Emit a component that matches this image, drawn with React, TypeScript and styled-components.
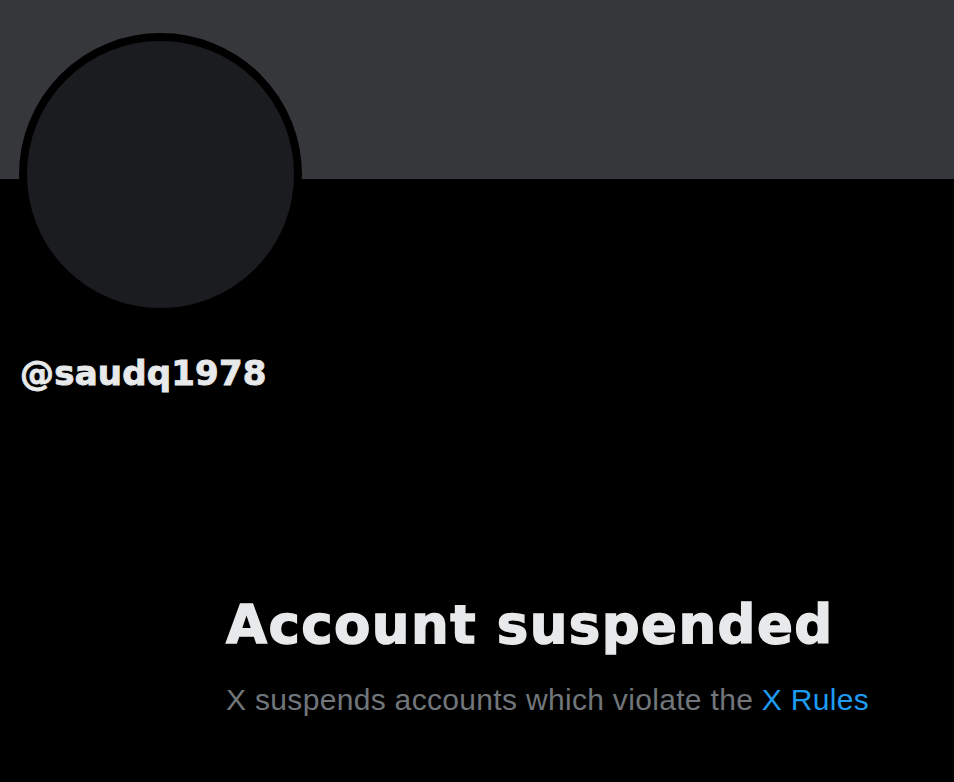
import React from "react";
import styled, { createGlobalStyle } from "styled-components";

const Global = createGlobalStyle`
  html, body { margin: 0; padding: 0; background: #000; }
  body { font-family: "Liberation Sans", Arial, sans-serif; }
`;

const Page = styled.div`
  width: 954px;
  height: 782px;
  background: #000;
  overflow: hidden;
  display: flex;
  flex-direction: column;
`;

const Banner = styled.div`
  height: 179px;
  background: #36373b;
  flex: none;
`;

const Profile = styled.div`
  display: flex;
  flex-direction: column;
  align-items: flex-start;
  padding-left: 19px;
`;

const Avatar = styled.div`
  width: 267px;
  height: 267px;
  margin-top: -146px;
  border: 8px solid #000;
  border-radius: 50%;
  background: #1b1c20;
`;

const Handle = styled.div`
  margin-top: 37px;
  margin-left: 1px;
  font-family: "DejaVu Sans", sans-serif;
  font-weight: 700;
  font-size: 34px;
  line-height: 40px;
  letter-spacing: 0.2px;
  -webkit-text-stroke: 0.9px #e7e9ea;
  color: #e7e9ea;
`;

const Notice = styled.div`
  margin-top: 202px;
  padding-left: 226px;
  display: flex;
  flex-direction: column;
  gap: 27px;
`;

const Title = styled.h1`
  margin: 0;
  font-family: "DejaVu Sans", sans-serif;
  font-weight: 700;
  font-size: 53px;
  line-height: 60px;
  letter-spacing: 1.4px;
  -webkit-text-stroke: 1.4px #e7e9ea;
  color: #e7e9ea;
`;

const Subtitle = styled.p`
  margin: 0;
  font-family: "Liberation Sans", Arial, sans-serif;
  font-size: 30px;
  line-height: 36px;
  letter-spacing: 0.32px;
  color: #71767b;
`;

const Link = styled.a`
  color: #1d9bf0;
  text-decoration: none;
`;

export default function App() {
  return (
    <>
      <Global />
      <Page>
        <Banner />
        <Profile>
          <Avatar />
          <Handle>@saudq1978</Handle>
        </Profile>
        <Notice>
          <Title>Account suspended</Title>
          <Subtitle>
            X suspends accounts which violate the <Link href="#">X Rules</Link>
          </Subtitle>
        </Notice>
      </Page>
    </>
  );
}
